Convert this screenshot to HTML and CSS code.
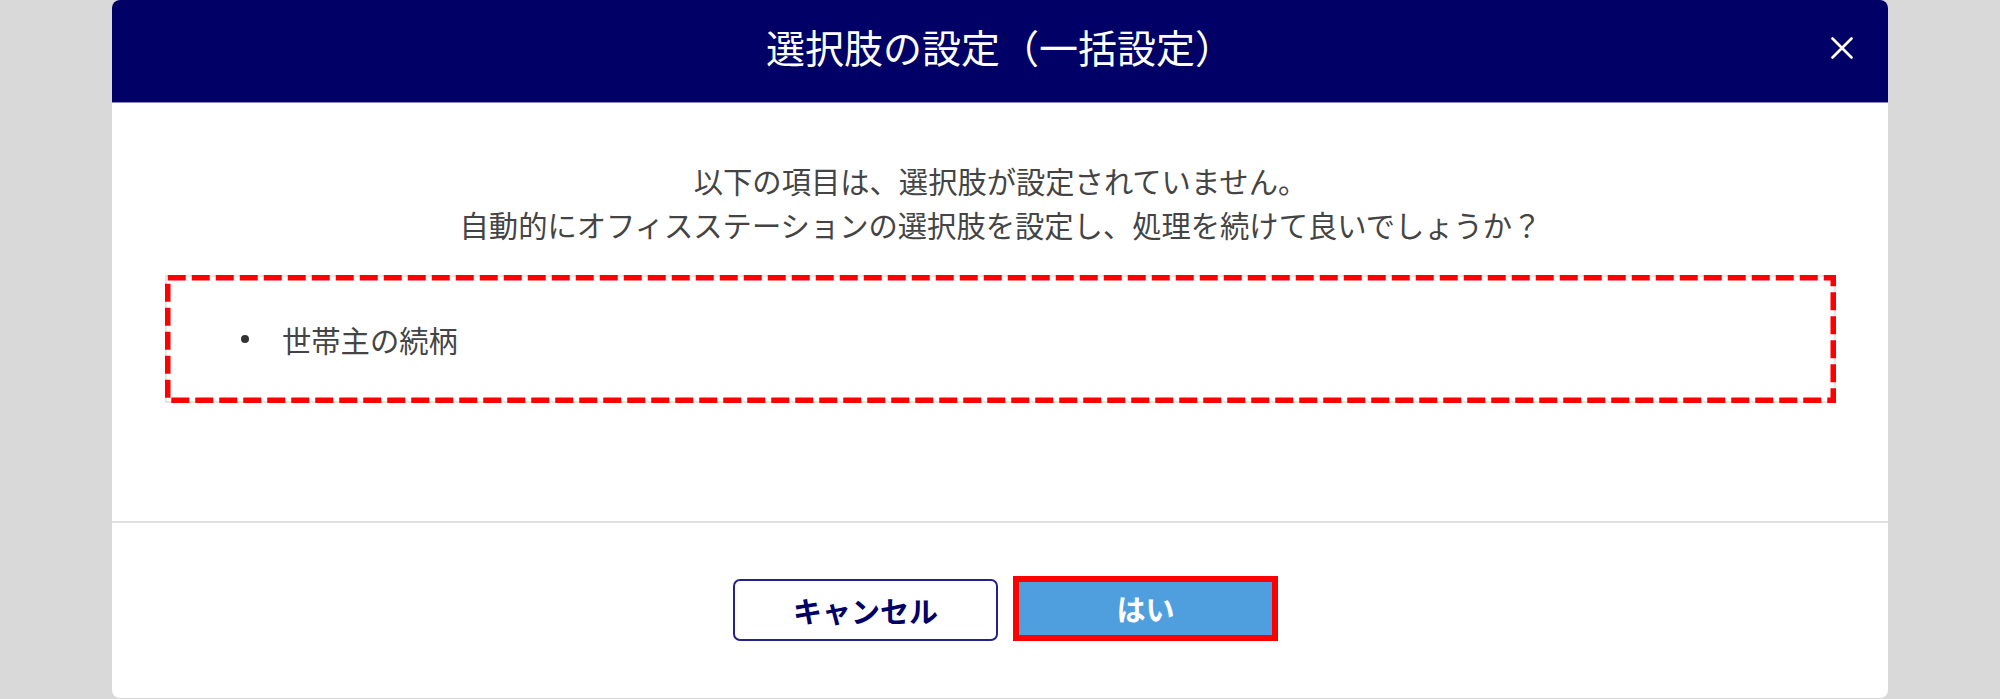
FILE: index.html
```html
<!DOCTYPE html>
<html lang="ja">
<head>
<meta charset="utf-8">
<title>選択肢の設定（一括設定）</title>
<link rel="stylesheet" href="styles.css">
</head>
<body>
<div class="overlay">
  <div class="modal">
    <div class="modal-header">
      <span class="header-spacer"></span>
      <h1 class="modal-title">選択肢の設定（一括設定）</h1>
      <button class="close-btn" aria-label="閉じる">
        <svg class="close-icon" width="22" height="22" viewBox="0 0 22 22"><path d="M1.5 1.5 L20.5 20.5 M20.5 1.5 L1.5 20.5" stroke="#ffffff" stroke-width="2.6" stroke-linecap="round" fill="none"/></svg>
      </button>
    </div>
    <div class="modal-body">
      <p class="message">以下の項目は、選択肢が設定されていません。<br>自動的にオフィスステーションの選択肢を設定し、処理を続けて良いでしょうか？</p>
      <div class="item-box">
        <ul class="item-list">
          <li class="item"><span class="dot"></span><span class="item-text">世帯主の続柄</span></li>
        </ul>
        <svg class="dash-frame" aria-hidden="true"><rect class="dash-rect"/></svg>
      </div>
    </div>
    <div class="modal-footer">
      <button class="btn btn-cancel">キャンセル</button>
      <button class="btn btn-ok">はい</button>
    </div>
  </div>
</div>
</body>
</html>
```
FILE: styles.css
```css
html, body {
  margin: 0;
  padding: 0;
}

body {
  background: #d9d9d9;
  font-family: "Noto Sans CJK JP", "Noto Sans", sans-serif;
  overflow: hidden;
}

.overlay {
  display: flex;
  justify-content: center;
  height: 699px;
}

.modal {
  width: 1776px;
  height: 698px;
  background: #ffffff;
  border-radius: 8px;
  overflow: hidden;
  display: flex;
  flex-direction: column;
}

.modal-header {
  box-sizing: border-box;
  height: 103px;
  padding-bottom: 10px;
  background: #000066;
  border-bottom: 1px solid #8a8ac8;
  display: grid;
  grid-template-columns: 1fr auto 1fr;
  align-items: center;
}

.modal-title {
  margin: 0;
  font-size: 39px;
  font-weight: 400;
  line-height: 1;
  color: #ffffff;
  white-space: nowrap;
}

.close-btn {
  justify-self: end;
  margin: 4px 35px 0 0;
  padding: 0;
  border: 0;
  background: none;
  width: 22px;
  height: 22px;
  display: flex;
}

.modal-body {
  padding: 55px 52px 0 53px;
}

.message {
  margin: 0;
  font-size: 29.3px;
  line-height: 44px;
  text-align: center;
  color: #444444;
}

.item-box {
  position: relative;
  box-sizing: border-box;
  margin: 29px 0 118px;
  height: 128px;
  border: 2px solid #e6e6e6;
  background: #ffffff;
}

.item-list {
  margin: 0;
  padding: 0;
  list-style: none;
  height: 100%;
  display: flex;
  align-items: center;
}

.item {
  display: flex;
  align-items: center;
  padding-left: 74px;
  font-size: 29.3px;
  line-height: 40px;
  color: #444444;
}

.dot {
  width: 8px;
  height: 8px;
  border-radius: 50%;
  background: #333333;
  margin-right: 33px;
}

.dash-frame {
  position: absolute;
  left: -2px;
  top: -2px;
  width: calc(100% + 4px);
  height: calc(100% + 4px);
  overflow: visible;
  pointer-events: none;
}

.dash-rect {
  x: 2.75px;
  y: 2.75px;
  width: calc(100% - 5.5px);
  height: calc(100% - 5.5px);
  fill: none;
  stroke: #ff0000;
  stroke-width: 5.5px;
  stroke-dasharray: 18 6;
}

.modal-footer {
  border-top: 2px solid #e0e0e0;
  display: flex;
  justify-content: center;
  align-items: flex-end;
  gap: 15px;
  padding: 53px 0 0 11px;
}

.btn {
  box-sizing: border-box;
  width: 265px;
  margin: 0;
  padding: 0;
  font-family: "Noto Sans CJK JP", "Noto Sans", sans-serif;
  font-size: 29px;
  font-weight: 700;
  line-height: 1;
  cursor: pointer;
}

.btn-cancel {
  height: 62px;
  background: #ffffff;
  border: 2px solid #22228a;
  border-radius: 7px;
  color: #000066;
}

.btn-ok {
  height: 65px;
  background: #4f9fdf;
  border: 6px solid #ff0000;
  border-radius: 0;
  color: #ffffff;
}
```
